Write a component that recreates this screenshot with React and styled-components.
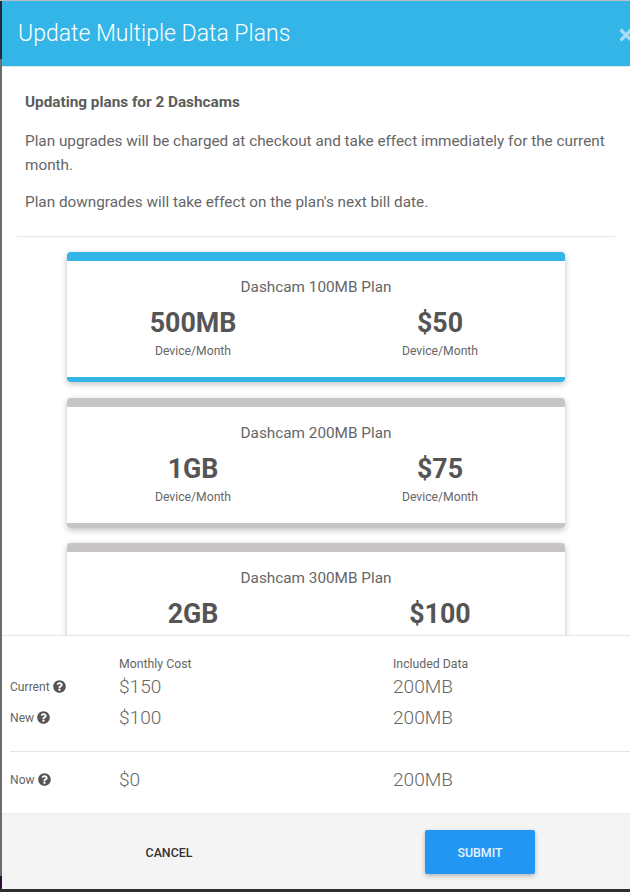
import styled, { createGlobalStyle } from 'styled-components'
import { FaQuestionCircle, FaTimes } from 'react-icons/fa'

const plans = [
  { name: 'Dashcam 100MB Plan', data: '500MB', price: '$50', selected: true },
  { name: 'Dashcam 200MB Plan', data: '1GB', price: '$75' },
  { name: 'Dashcam 300MB Plan', data: '2GB', price: '$100' }
]

const GlobalStyle = createGlobalStyle`
  html, body {
    margin: 0;
    height: 100%;
    overflow: hidden;
  }
  body {
    font-family: Roboto, "Liberation Sans", sans-serif;
    color: #666;
  }
`

const Backdrop = styled.div`
  box-sizing: border-box;
  width: 630px;
  height: 892px;
  padding: 0 0 3px 2px;
  border-top: 1px solid #b9c0c4;
  background: linear-gradient(180deg, #1f2a33 0, #1f2a33 58px, #6a6d70 58px, #6a6d70 875px, #2a1230 875px, #2a1230 887px, #2b2f2f 887px);
`

const Modal = styled.div`
  display: flex;
  flex-direction: column;
  height: 100%;
  background: #fff;
  overflow: hidden;
`

const Header = styled.header`
  position: relative;
  flex: 0 0 66px;
  box-sizing: border-box;
  display: flex;
  align-items: center;
  padding-left: 16px;
  background: #33b5e8;
  border-bottom: 1px solid #dfe6ea;
`

const Title = styled.h1`
  margin: 0;
  font-size: 23px;
  font-weight: 300;
  color: #fff;
`

const Close = styled.span`
  position: absolute;
  left: 615px;
  top: 25px;
  display: flex;
  color: #a9dff5;
  font-size: 18px;
`

const Content = styled.div`
  flex: 1;
  min-height: 0;
  overflow: hidden;
  padding: 0 15px;
`

const Intro = styled.div`
  padding: 25px 8px 22px;
  border-bottom: 1px solid #e6e6e6;
`

const Lead = styled.p`
  margin: 0 0 17px;
  font-size: 15.3px;
  font-weight: 700;
  line-height: 20px;
  color: #5c5c5c;
`

const Note = styled.p`
  margin: 0 0 13px;
  font-size: 15.3px;
  line-height: 24px;
  color: #666;
  &:last-child {
    margin-bottom: 0;
  }
`

const PlanList = styled.div`
  display: flex;
  flex-direction: column;
  gap: 15.5px;
  width: 498px;
  margin: 15px auto 0;
`

const PlanCard = styled.div`
  box-sizing: border-box;
  flex: 0 0 130px;
  padding: 17px 0 0;
  text-align: center;
  background: #fff;
  border-radius: 4px;
  border-top: 9px solid ${p => (p.$selected ? '#33b5e8' : '#c6c4c4')};
  border-bottom: 5px solid ${p => (p.$selected ? '#33b5e8' : '#c6c4c4')};
  box-shadow: 0 2px 6px rgba(0, 0, 0, 0.25);
`

const PlanName = styled.div`
  font-size: 15.3px;
  line-height: 18px;
  color: #666;
`

const PlanStats = styled.div`
  display: grid;
  grid-template-columns: 1fr 1fr;
  margin-top: 10px;
  padding: 0 1.5px 0 2.5px;
`

const StatValue = styled.div`
  font-size: 26.8px;
  font-weight: 700;
  line-height: 34px;
  color: #555;
`

const StatUnit = styled.div`
  margin-top: 3px;
  font-size: 12.2px;
  line-height: 16px;
  color: #666;
`

const Summary = styled.section`
  flex: 0 0 178px;
  box-sizing: border-box;
  padding: 20px 0 0 8px;
  background: #fff;
  border-top: 1px solid #e6e6e6;
`

const SummaryRow = styled.div`
  display: grid;
  grid-template-columns: 109px 274px 1fr;
  align-items: center;
  height: ${p => p.$height || '31px'};
`

const HeadCell = styled.div`
  font-size: 12.3px;
  color: #666;
`

const RowLabel = styled.div`
  display: flex;
  align-items: center;
  gap: 3px;
  font-size: 12.1px;
  color: #666;
`

const Help = styled(FaQuestionCircle)`
  font-size: 13px;
  color: #555;
`

const Amount = styled.div`
  font-size: 19.1px;
  font-weight: 300;
  color: #666;
`

const Divider = styled.hr`
  margin: 18px 0 12px;
  border: 0;
  border-top: 1px solid #e6e6e6;
`

const Footer = styled.footer`
  flex: 0 0 76px;
  box-sizing: border-box;
  display: flex;
  align-items: flex-start;
  padding: 16px 0 0 112px;
  background: #f4f4f4;
  border-top: 1px solid #ececec;
`

const CancelButton = styled.button`
  width: 110px;
  height: 44px;
  margin-right: 201px;
  padding: 0;
  border: 0;
  background: transparent;
  font: 500 12.4px Roboto, sans-serif;
  color: #333;
`

const SubmitButton = styled.button`
  width: 110px;
  height: 44px;
  padding: 0;
  border: 0;
  border-radius: 2px;
  background: #2196f3;
  font: 500 12.4px Roboto, sans-serif;
  color: #e6f3fe;
  box-shadow: 0 2px 5px rgba(0, 0, 0, 0.26);
`

function Label ({ children }) {
  return (
    <RowLabel>
      {children}
      <Help />
    </RowLabel>
  )
}

export default function App () {
  return (
    <>
      <GlobalStyle />
      <Backdrop>
        <Modal>
          <Header>
            <Title>Update Multiple Data Plans</Title>
            <Close><FaTimes /></Close>
          </Header>
          <Content>
            <Intro>
              <Lead>Updating plans for 2 Dashcams</Lead>
              <Note>Plan upgrades will be charged at checkout and take effect immediately for the current month.</Note>
              <Note>Plan downgrades will take effect on the plan's next bill date.</Note>
            </Intro>
            <PlanList>
              {plans.map(plan => (
                <PlanCard key={plan.name} $selected={plan.selected}>
                  <PlanName>{plan.name}</PlanName>
                  <PlanStats>
                    <div>
                      <StatValue>{plan.data}</StatValue>
                      <StatUnit>Device/Month</StatUnit>
                    </div>
                    <div>
                      <StatValue>{plan.price}</StatValue>
                      <StatUnit>Device/Month</StatUnit>
                    </div>
                  </PlanStats>
                </PlanCard>
              ))}
            </PlanList>
          </Content>
          <Summary>
            <SummaryRow $height='15px'>
              <span />
              <HeadCell>Monthly Cost</HeadCell>
              <HeadCell>Included Data</HeadCell>
            </SummaryRow>
            <SummaryRow>
              <Label>Current</Label>
              <Amount>$150</Amount>
              <Amount>200MB</Amount>
            </SummaryRow>
            <SummaryRow>
              <Label>New</Label>
              <Amount>$100</Amount>
              <Amount>200MB</Amount>
            </SummaryRow>
            <Divider />
            <SummaryRow>
              <Label>Now</Label>
              <Amount>$0</Amount>
              <Amount>200MB</Amount>
            </SummaryRow>
          </Summary>
          <Footer>
            <CancelButton>CANCEL</CancelButton>
            <SubmitButton>SUBMIT</SubmitButton>
          </Footer>
        </Modal>
      </Backdrop>
    </>
  )
}
